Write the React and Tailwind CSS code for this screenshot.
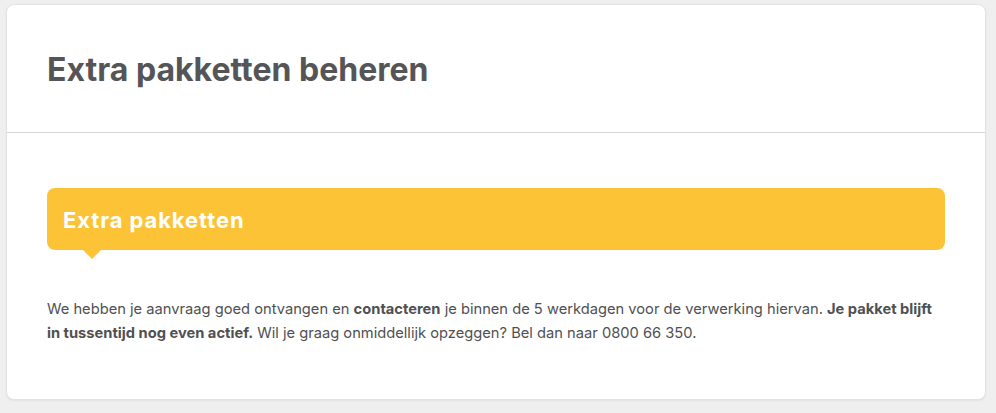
export default function App() {
    return (
        <div className="min-h-[413px] bg-[#efefef] pt-1 pl-[6px] pr-[10px] pb-[15px]" style={{ fontFamily: 'Inter, "Noto Sans", sans-serif' }}>
            <div className="bg-white rounded-lg border border-[#e2e2e2] shadow-[0_1px_2px_rgba(0,0,0,0.05)]">
                <div className="h-[128px] border-b border-[#d6d6d6] flex items-center px-10">
                    <h1 className="text-[32px] font-bold text-[#555558] tracking-[0px] pt-[2px]">Extra pakketten beheren</h1>
                </div>
                <div className="px-10 pt-[55px] pb-[54px]">
                    <div className="relative h-[62px] bg-[#fdc337] rounded-lg flex items-center px-4">
                        <h2 className="text-[22px] font-bold text-white tracking-[0.9px] pt-[2px]">Extra pakketten</h2>
                        <div className="absolute left-[36px] top-full w-0 h-0 border-l-[9px] border-r-[9px] border-t-[9px] border-l-transparent border-r-transparent border-t-[#fdc337]"></div>
                    </div>
                    <p className="mt-[47px] text-[14.7px] leading-[24px] text-[#505053]">
                        We hebben je aanvraag goed ontvangen en <b className="font-bold">contacteren</b> je binnen de 5 werkdagen voor de verwerking hiervan. <b className="font-bold">Je pakket blijft in tussentijd nog even actief.</b> Wil je graag onmiddellijk opzeggen? Bel dan naar 0800 66 350.
                    </p>
                </div>
            </div>
        </div>
    );
}
